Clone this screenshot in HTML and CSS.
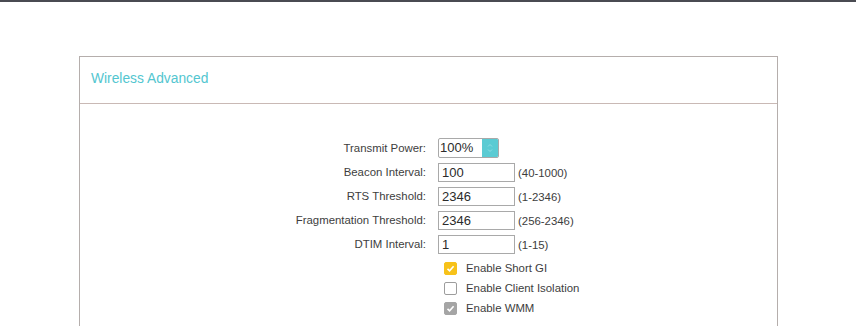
FILE: index.html
```html
<!DOCTYPE html>
<html>
<head>
<meta charset="utf-8">
<link rel="stylesheet" href="styles.css">
</head>
<body>
<div class="topbar"></div>
<div class="card">
  <div class="card-head">Wireless Advanced</div>
  <div class="card-body">
    <div class="form">
      <label class="lbl">Transmit Power:</label>
      <div class="field">
        <div class="select"><span class="sel-val">100%</span><span class="sel-btn"><svg viewBox="0 0 16 18"><path d="M6 7.5 L8 5.5 L10 7.5 M6 10.5 L8 12.5 L10 10.5" fill="none" stroke="#8fdde3" stroke-width="1"/></svg></span></div>
      </div>
      <label class="lbl">Beacon Interval:</label>
      <div class="field"><input class="txt" value="100"><span class="hint">(40-1000)</span></div>
      <label class="lbl">RTS Threshold:</label>
      <div class="field"><input class="txt" value="2346"><span class="hint">(1-2346)</span></div>
      <label class="lbl">Fragmentation Threshold:</label>
      <div class="field"><input class="txt" value="2346"><span class="hint">(256-2346)</span></div>
      <label class="lbl">DTIM Interval:</label>
      <div class="field"><input class="txt" value="1"><span class="hint">(1-15)</span></div>
    </div>
    <div class="checks">
      <div class="chk-row"><span class="box on"><svg viewBox="0 0 13 13"><path d="M3.5 6.8 L5.6 8.8 L9.6 4.2" fill="none" stroke="#fff" stroke-width="1.6"/></svg></span><span class="chk-text">Enable Short GI</span></div>
      <div class="chk-row"><span class="box"></span><span class="chk-text">Enable Client Isolation</span></div>
      <div class="chk-row"><span class="box dis"><svg viewBox="0 0 13 13"><path d="M3.5 6.8 L5.6 8.8 L9.6 4.2" fill="none" stroke="#fff" stroke-width="1.6"/></svg></span><span class="chk-text">Enable WMM</span></div>
    </div>
  </div>
</div>
</body>
</html>
```

FILE: styles.css
```css
html, body { margin: 0; padding: 0; background: #fff; }
body { font-family: "Liberation Sans", Arial, sans-serif; color: #3d3d3d; width: 856px; height: 326px; overflow: hidden; }
.topbar { height: 2px; background: #4a4b52; }
.card {
  margin: 54px 0 0 79px;
  width: 697px;
  border: 1px solid #b5aeac;
  height: 269px;
}
.card-head {
  height: 47px;
  border-bottom: 1px solid #c9b9b5;
  color: #53c6d0;
  font-size: 13.8px;
  display: flex;
  align-items: center;
  padding-left: 11px;
  padding-bottom: 3px;
  box-sizing: border-box;
}
.card-body { padding-top: 35px; }
.form {
  display: grid;
  grid-template-columns: 346px auto;
  column-gap: 12px;
  row-gap: 5px;
  align-items: center;
}
.lbl { text-align: right; font-size: 11.4px; color: #3d3d3d; line-height: 19px; }
.field { display: flex; align-items: center; height: 19px; }
.select {
  width: 61px; height: 20px; border: 1px solid #a9a9a9; border-radius: 2px;
  display: flex; box-sizing: border-box; margin-top: -1px; overflow: hidden;
}
.sel-val { flex: 1; font-size: 13px; line-height: 18px; padding-left: 1px; color: #2b2b2b; }
.sel-btn { width: 16px; background: #5bcbd3; display: flex; align-items: center; }
.sel-btn svg { width: 16px; height: 18px; display: block; }
.txt {
  width: 77px; height: 19px; box-sizing: border-box; border: 1px solid #a9a9a9;
  font-family: "Liberation Sans", Arial, sans-serif; font-size: 13px; color: #2b2b2b;
  padding: 0 3px; margin: 0; outline: none;
}
.hint { margin-left: 3px; font-size: 11.4px; color: #3d3d3d; }
.checks { margin-left: 364px; margin-top: 4px; }
.chk-row { display: flex; align-items: center; height: 20px; }
.box {
  width: 13px; height: 13px; box-sizing: border-box; border: 1px solid #9d9d9d; border-radius: 2px;
  background: #fff; display: inline-block; position: relative;
}
.box svg { width: 13px; height: 13px; display: block; position: absolute; left: -1px; top: -1px; }
.box.on { background: #f7c21a; border-color: #f7c21a; }
.box.dis { background: #a5a5a5; border-color: #a5a5a5; }
.chk-text { margin-left: 9px; font-size: 11.4px; color: #3d3d3d; }
```
